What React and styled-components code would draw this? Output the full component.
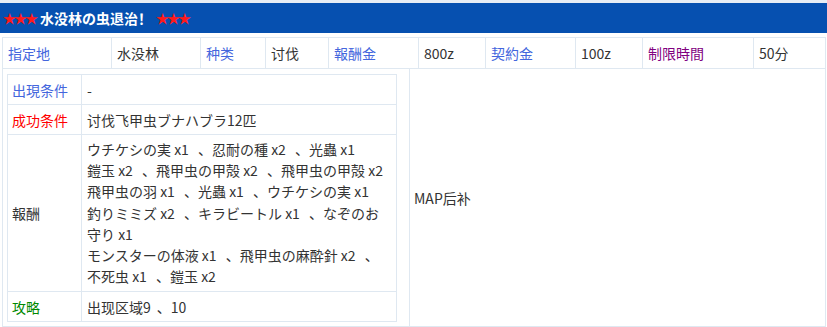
import styled, { createGlobalStyle } from "styled-components";

const GlobalStyle = createGlobalStyle`
  body {
    margin: 0;
    background: #ffffff;
    font-family: "Noto Sans CJK SC", "Noto Sans CJK JP", "Noto Sans", sans-serif;
    font-size: 14px;
    color: #333333;
  }
`;

const line = "#dfe8f1";

const Page = styled.div`
  width: 827px;
  height: 327px;
  border-top: 3px solid #e6edf5;
  box-sizing: border-box;
`;

const Header = styled.h2`
  margin: 0 0 4px;
  height: 30px;
  display: flex;
  align-items: center;
  gap: 4px;
  padding-left: 3px;
  background: #0650b0;
  color: #ffffff;
  font-size: 14px;
  font-weight: 700;
  line-height: 30px;
`;

const Stars = styled.span`
  color: #ff1a1a;
  font-size: 13px;
  letter-spacing: -2px;
`;

const Table = styled.div`
  width: 824px;
  margin-left: 2px;
  border-top: 1px solid ${line};
  border-left: 1px solid ${line};
  box-sizing: border-box;
`;

const InfoRow = styled.div`
  display: grid;
  grid-template-columns: 109px 89px 65px 63px 90px 67px 90px 67px 111px 72px;
`;

const Cell = styled.div`
  height: 30px;
  padding-left: 5px;
  display: flex;
  align-items: center;
  border-right: 1px solid ${line};
  border-bottom: 1px solid ${line};
  color: ${(p) => p.$color || "#333333"};
  white-space: nowrap;
`;

const DetailRow = styled.div`
  display: grid;
  grid-template-columns: 407px 416px;
`;

const SideCell = styled.div`
  padding: 5px 0 4px 4px;
  border-right: 1px solid ${line};
  border-bottom: 1px solid ${line};
`;

const MapCell = styled.div`
  display: flex;
  align-items: center;
  padding-left: 4px;
  border-right: 1px solid ${line};
  border-bottom: 1px solid ${line};
`;

const Inner = styled.div`
  width: 390px;
  display: grid;
  grid-template-columns: 74px 315px;
  border-top: 1px solid ${line};
  border-left: 1px solid ${line};
  box-sizing: border-box;
`;

const Label = styled.div`
  min-height: 29px;
  padding-left: 4px;
  display: flex;
  align-items: center;
  border-right: 1px solid ${line};
  border-bottom: 1px solid ${line};
  color: ${(p) => p.$color};
`;

const Value = styled.div`
  min-height: 29px;
  padding: ${(p) => (p.$multi ? "4px 5px" : "0 5px")};
  display: flex;
  align-items: center;
  border-right: 1px solid ${line};
  border-bottom: 1px solid ${line};
  line-height: ${(p) => (p.$multi ? "21.2px" : "normal")};
  white-space: nowrap;
`;

// the list separator gets some air on its left
const Comma = styled.span`
  padding-left: 6px;
`;

const withCommas = (text) =>
  text.split("、").map((part, i) => (
    <span key={i}>
      {i > 0 && <Comma>、</Comma>}
      {part}
    </span>
  ));

const info = [
  ["指定地", "#4466dd"],
  ["水没林"],
  ["种类", "#4466dd"],
  ["讨伐"],
  ["報酬金", "#4466dd"],
  ["800z"],
  ["契約金", "#4466dd"],
  ["100z"],
  ["制限時間", "#800080"],
  ["50分"],
];

const rewards = [
  "ウチケシの実 x1 、忍耐の種 x2 、光蟲 x1",
  "鎧玉 x2 、飛甲虫の甲殻 x2 、飛甲虫の甲殻 x2",
  "飛甲虫の羽 x1 、光蟲 x1 、ウチケシの実 x1",
  "釣りミミズ x2 、キラビートル x1 、なぞのお",
  "守り x1",
  "モンスターの体液 x1 、飛甲虫の麻酔針 x2 、",
  "不死虫 x1 、鎧玉 x2",
];

export default function App() {
  return (
    <Page>
      <GlobalStyle />
      <Header>
        <Stars>★★★</Stars>
        <span>水没林の虫退治！</span>
        <Stars>★★★</Stars>
      </Header>
      <Table>
        <InfoRow>
          {info.map(([text, color], i) => (
            <Cell key={i} $color={color}>
              {text}
            </Cell>
          ))}
        </InfoRow>
        <DetailRow>
          <SideCell>
            <Inner>
              <Label $color="#4466dd">出現条件</Label>
              <Value>-</Value>
              <Label $color="#ff0000">成功条件</Label>
              <Value>讨伐飞甲虫ブナハブラ12匹</Value>
              <Label $color="#333333">報酬</Label>
              <Value $multi>
                <div>
                  {rewards.map((r, i) => (
                    <div key={i}>{withCommas(r)}</div>
                  ))}
                </div>
              </Value>
              <Label $color="#008800">攻略</Label>
              <Value>{withCommas("出现区域9、10")}</Value>
            </Inner>
          </SideCell>
          <MapCell>MAP后补</MapCell>
        </DetailRow>
      </Table>
    </Page>
  );
}
